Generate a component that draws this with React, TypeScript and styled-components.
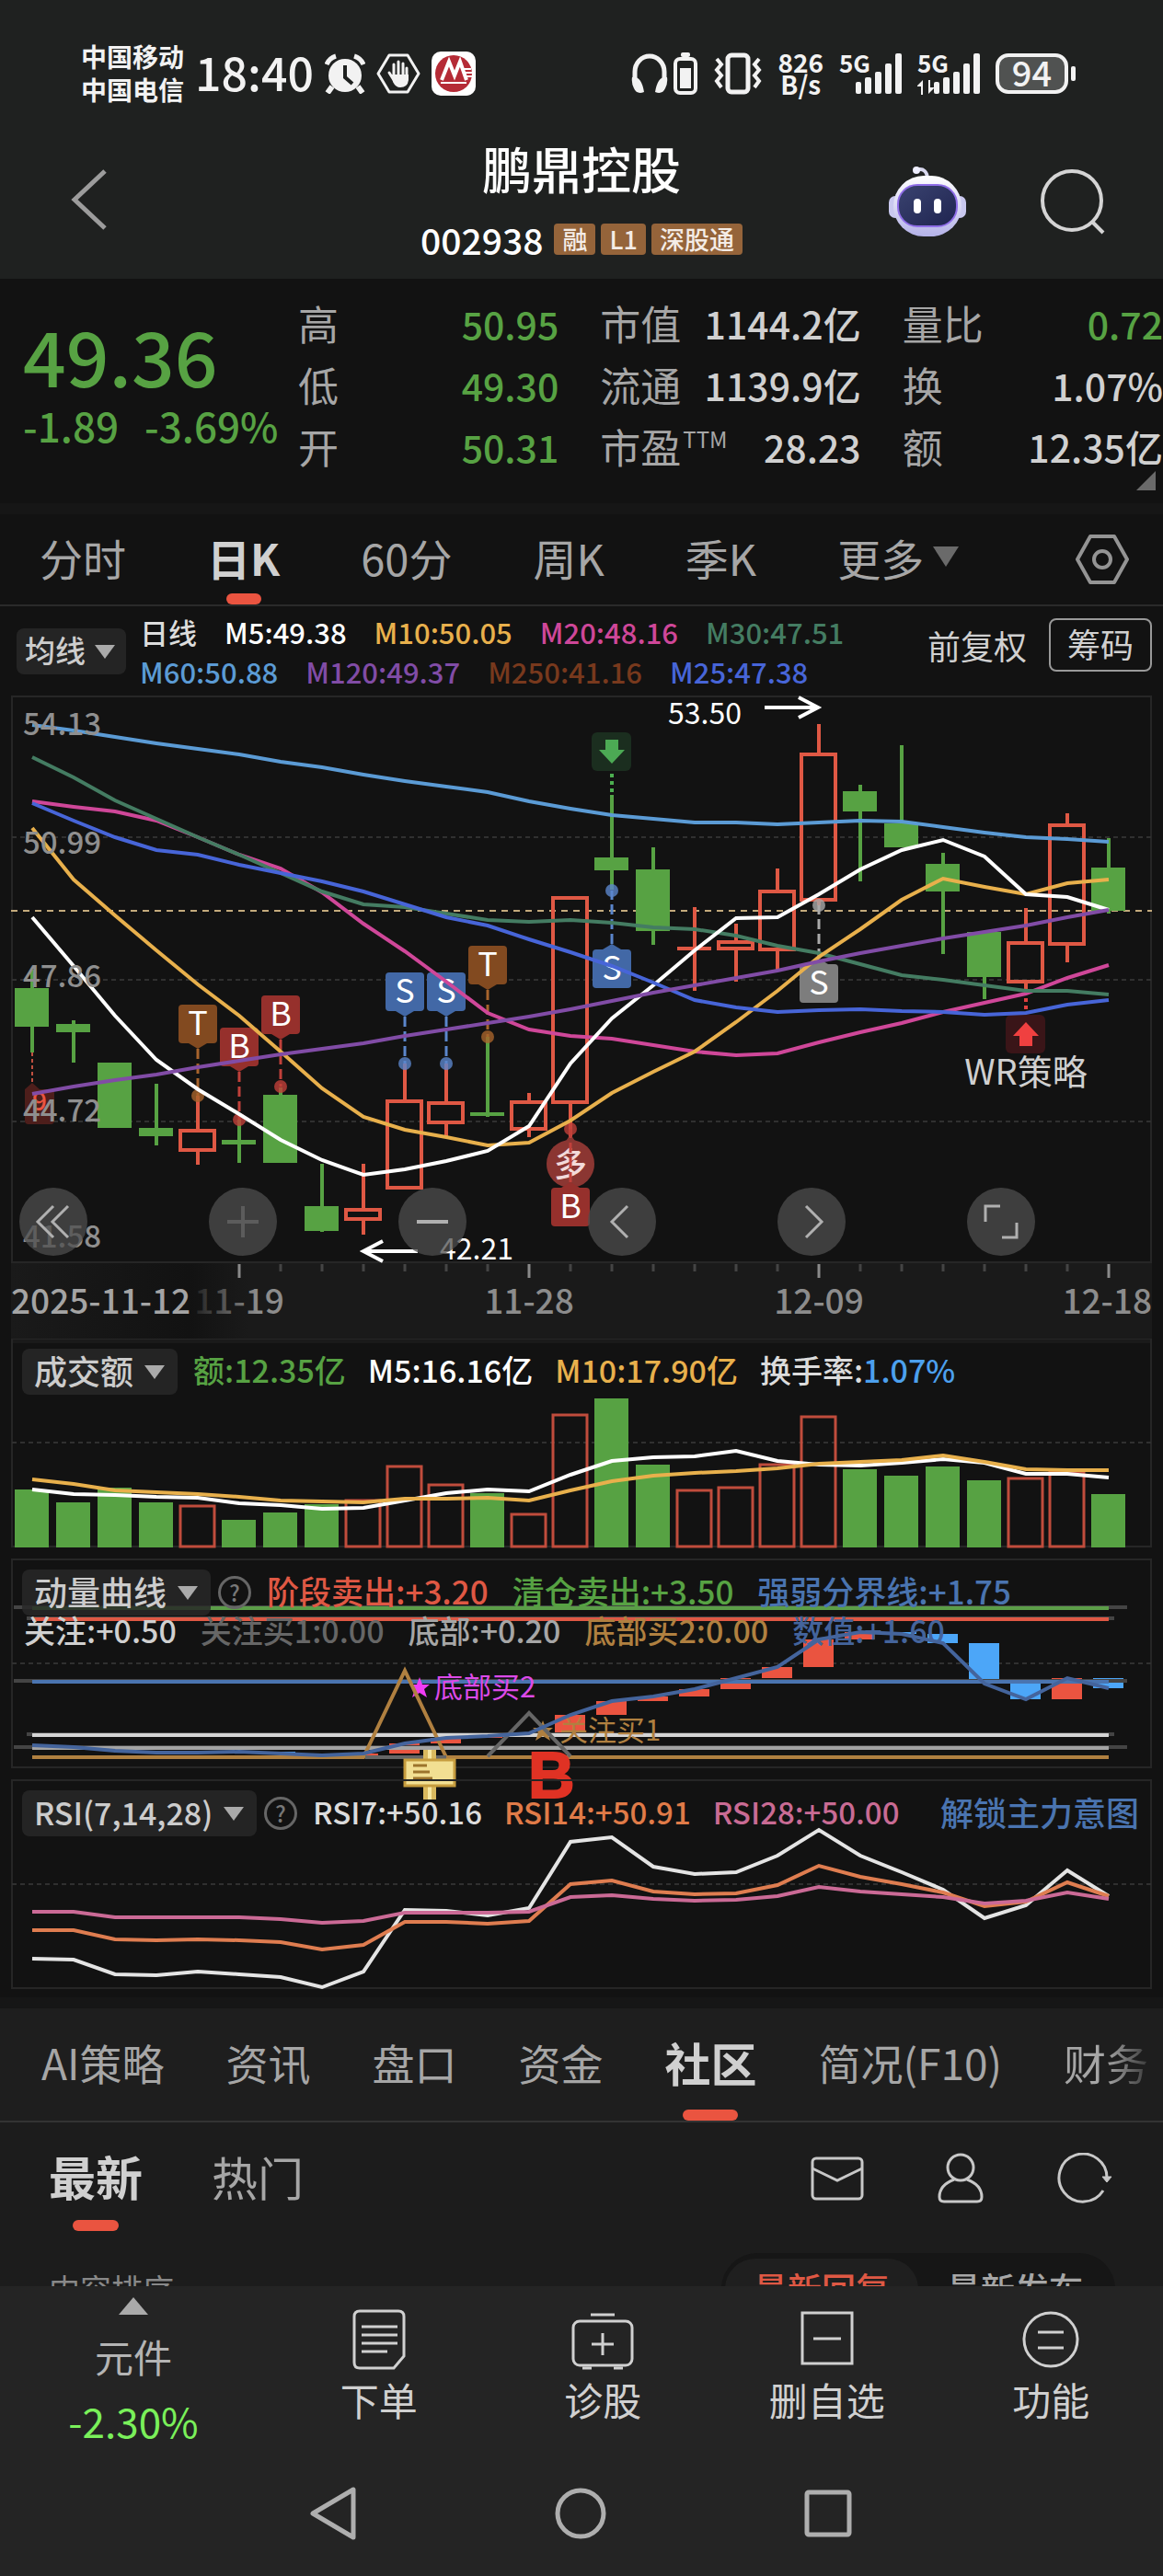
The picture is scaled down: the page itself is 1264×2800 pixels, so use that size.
import React from 'react';
import styled, { createGlobalStyle } from 'styled-components';

const GlobalStyle = createGlobalStyle`
  *, *::before, *::after { box-sizing: border-box; }
  body {
    margin: 0;
    background: #121212;
    color: #d0d0d0;
    font-family: "Noto Sans CJK SC", "Noto Sans", sans-serif;
    font-weight: 500;
  }
  button, select {
    font: inherit;
    color: inherit;
    background: none;
    border: 0;
    padding: 0;
    margin: 0;
  }
  svg { display: block; }
`;

const color = {
  up: '#df5844',
  down: '#57a243',
  text: '#d0d0d0',
  mute: '#a6a6a6',
  accent: '#ea5440',
  sky: '#5b9bd5',
  amber: '#e8b04c',
  pink: '#cf4799',
  pine: '#447c62',
  royal: '#4765d8',
  violet: '#814ca6',
  steel: '#4a74b0',
  ochre: '#b08040',
};

/* ---------- status bar and title ---------- */

const Header = styled.header`
  background: #1f2120;
`;

const StatusBar = styled.div`
  display: flex;
  align-items: center;
  justify-content: space-between;
  height: 116px;
  padding: 44px 95px 0 88px;
  color: #f2f2f2;
`;

const StatusGroup = styled.div<{ $gap: number }>`
  display: flex;
  align-items: center;
  gap: ${(p) => p.$gap}px;
`;

const TwoLines = styled.div<{ $size: number; $line: number }>`
  display: flex;
  flex-direction: column;
  padding-bottom: 2px;
  font-size: ${(p) => p.$size}px;
  line-height: ${(p) => p.$line}px;
  font-weight: 700;
  text-align: center;
`;

const Clock = styled.time`
  padding-bottom: 6px;
  font-size: 50px;
  line-height: 60px;
  font-weight: 500;
`;

const TitleBar = styled.div`
  display: grid;
  grid-template-columns: 1fr auto 1fr;
  align-items: center;
  height: 187px;
  padding: 19px 60px 0;
`;

const TitleStart = styled.div`
  padding-left: 16px;
`;

const TitleBlock = styled.div`
  display: flex;
  flex-direction: column;
  align-items: center;
  gap: 28px;
  padding-bottom: 11px;
`;

const StockName = styled.h1`
  margin: 0;
  font-size: 54px;
  line-height: 64px;
  font-weight: 500;
  color: #fff;
`;

const CodeRow = styled.div`
  display: flex;
  align-items: center;
  gap: 6px;
  height: 34px;
`;

const StockCode = styled.span`
  margin-right: 6px;
  font-size: 39px;
  line-height: 34px;
  color: #fff;
`;

const Tag = styled.span`
  padding: 0 9px;
  border-radius: 4px;
  background: #95643a;
  color: #f4ece6;
  font-size: 27px;
  line-height: 34px;
`;

const IconButton = styled.button`
  display: inline-flex;
  cursor: pointer;
`;

const TitleActions = styled.div`
  display: flex;
  justify-content: flex-end;
  align-items: center;
  gap: 78px;
`;

/* ---------- quote ---------- */

const Quote = styled.section`
  position: relative;
  display: flex;
  height: 244px;
  padding-top: 15px;
`;

const PriceBlock = styled.div`
  flex: 0 0 324px;
  padding: 23px 0 0 25px;
  color: ${color.down};
`;

const Price = styled.div`
  font-size: 82px;
  line-height: 90px;
`;

const Change = styled.div`
  display: flex;
  gap: 28px;
  font-size: 44px;
  line-height: 62px;
`;

const Figures = styled.dl`
  flex: 1;
  display: grid;
  grid-template-columns: repeat(3, 1fr);
  grid-auto-rows: 67px;
  column-gap: 45px;
  margin: 0;
`;

const Figure = styled.div`
  display: flex;
  justify-content: space-between;
  line-height: 67px;
  white-space: nowrap;
`;

const FigureName = styled.dt`
  display: flex;
  font-size: 44px;
  font-weight: 400;
  color: ${color.mute};
`;

const Superscript = styled.span`
  margin-left: 2px;
  font-size: 24px;
  line-height: 50px;
`;

const FigureValue = styled.dd<{ $down?: boolean }>`
  margin: 0;
  font-size: 41px;
  color: ${(p) => (p.$down ? color.down : color.text)};
`;

const Corner = styled.svg`
  position: absolute;
  right: 8px;
  bottom: 14px;
`;

const Divider = styled.div`
  height: 12px;
  background: #161616;
`;

/* ---------- tabs ---------- */

const PeriodTabs = styled.nav`
  display: flex;
  align-items: center;
  gap: 88px;
  height: 100px;
  padding: 0 37px 0 43px;
  border-bottom: 2px solid #2a2a2a;
`;

const Tab = styled.button<{ $active?: boolean; $size: number; $mark: number }>`
  display: flex;
  align-items: center;
  gap: 10px;
  align-self: stretch;
  position: relative;
  padding-bottom: 6px;
  white-space: nowrap;
  font-size: ${(p) => p.$size}px;
  font-weight: ${(p) => (p.$active ? 700 : 400)};
  color: ${(p) => (p.$active ? color.text : color.mute)};
  cursor: pointer;
  &::after {
    content: '';
    display: ${(p) => (p.$active ? 'block' : 'none')};
    position: absolute;
    left: 50%;
    bottom: 0;
    width: ${(p) => p.$mark}px;
    height: 12px;
    margin-left: ${(p) => -p.$mark / 2}px;
    border-radius: 6px;
    background: ${color.accent};
  }
`;

const PushRight = styled.div`
  margin-left: auto;
  display: flex;
  align-items: center;
  gap: 80px;
`;

const SectionTabs = styled.nav`
  display: flex;
  gap: 67px;
  height: 124px;
  padding: 0 24px 0 45px;
  overflow: hidden;
  background: #1e1e1e;
  border-bottom: 2px solid #333;
  & > button:last-child {
    background: linear-gradient(90deg, ${color.mute} 50%, #3a3a3a);
    -webkit-background-clip: text;
    background-clip: text;
    color: transparent;
  }
`;

/* ---------- chart headers ---------- */

const AverageBar = styled.div`
  display: flex;
  align-items: center;
  height: 97px;
  padding: 0 12px 0 18px;
`;

const Picker = styled.label<{ $size: number }>`
  display: inline-flex;
  align-items: center;
  gap: 11px;
  flex: none;
  height: 50px;
  padding: 0 14px 0 13px;
  border-radius: 8px;
  background: rgba(40, 40, 40, 0.85);
  color: #ccc;
  font-size: ${(p) => p.$size}px;
  & > select {
    appearance: none;
    height: 50px;
    padding-bottom: 3px;
    line-height: 47px;
    cursor: pointer;
  }
`;

const SmallPicker = styled(Picker)`
  gap: 10px;
  padding: 0 12px 0 9px;
`;

const AverageLegend = styled.div`
  margin-left: 15px;
`;

const LegendRow = styled.div<{ $gap: number; $line: number; $size: number }>`
  display: flex;
  gap: ${(p) => p.$gap}px;
  font-size: ${(p) => p.$size}px;
  line-height: ${(p) => p.$line}px;
  white-space: nowrap;
`;

const Tint = styled.span<{ $c: string }>`
  color: ${(p) => p.$c};
`;

const AverageActions = styled.div`
  display: flex;
  align-items: center;
  gap: 24px;
  margin-left: auto;
  padding-bottom: 13px;
  font-size: 36px;
  font-weight: 400;
`;

const AdjustButton = styled.button`
  cursor: pointer;
`;

const ChipButton = styled.button`
  height: 58px;
  padding: 0 18px 4px;
  border: 2px solid #999;
  border-radius: 8px;
  line-height: 50px;
  cursor: pointer;
`;

const Panel = styled.section`
  display: grid;
  & > * { grid-area: 1 / 1; }
`;

const PanelHead = styled.div`
  align-self: start;
  padding: 12px 24px 0;
`;

const PanelLine = styled.div`
  display: flex;
  align-items: center;
  height: 49px;
  & > ${LegendRow} {
    margin-left: 17px;
    padding-bottom: 3px;
  }
`;

const SecondLine = styled.div`
  margin-left: 2px;
`;

const HelpButton = styled.button`
  flex: none;
  width: 36px;
  height: 36px;
  margin-left: 8px;
  border: 3px solid #666;
  border-radius: 50%;
  color: #777;
  font-size: 24px;
  line-height: 28px;
  text-align: center;
  cursor: pointer;
`;

const UnlockLink = styled.a`
  margin-left: auto;
  padding: 0 2px 3px 0;
  font-size: 36px;
  color: ${color.steel};
  text-decoration: none;
  white-space: nowrap;
`;

const Plot = styled.svg`
  width: 100%;
  height: auto;
  overflow: visible;
  font-family: "Noto Sans CJK SC", sans-serif;
`;

const ChartArea = styled.section`
  position: relative;
`;

const ChartControls = styled.div`
  position: absolute;
  left: 21px;
  bottom: 89px;
  display: flex;
  gap: 132px;
`;

const RoundButton = styled.button`
  width: 74px;
  height: 74px;
  display: flex;
  align-items: center;
  justify-content: center;
  border-radius: 50%;
  background: rgba(77, 77, 77, 0.75);
  cursor: pointer;
`;

/* ---------- community ---------- */

const Community = styled.section`
  background: #1c1c1c;
`;

const FeedTabs = styled.div`
  display: flex;
  align-items: center;
  height: 118px;
  padding: 4px 55px 0 53px;
`;

const FeedTab = styled(Tab)`
  margin-right: 75px;
`;

const FeedIcons = styled(PushRight)`
  gap: 80px;
`;

const SortRow = styled.div`
  display: flex;
  align-items: flex-start;
  justify-content: space-between;
  height: 60px;
  padding: 24px 52px 0 53px;
  overflow: hidden;
`;

const SortLabel = styled.span`
  font-size: 34px;
  line-height: 78px;
  font-weight: 400;
  color: #888;
`;

const Segment = styled.div`
  display: flex;
  padding: 6px 4px;
  border-radius: 40px;
  background: #161616;
`;

const SegmentItem = styled.button<{ $on?: boolean }>`
  height: 66px;
  padding: 0 31px 3px;
  border-radius: 33px;
  background: ${(p) => (p.$on ? '#1f1f1f' : 'transparent')};
  color: ${(p) => (p.$on ? color.up : color.mute)};
  font-size: 37px;
  line-height: 62px;
  cursor: pointer;
`;

/* ---------- bottom bars ---------- */

const Dock = styled.nav`
  display: flex;
  height: 182px;
  background: #242424;
`;

const SectorLink = styled.a`
  flex: 0 0 290px;
  display: flex;
  flex-direction: column;
  align-items: center;
  padding-top: 12px;
  color: #b4b4b4;
  font-size: 42px;
  line-height: 70px;
  font-weight: 400;
  text-decoration: none;
  & > svg { margin-bottom: 10px; }
`;

const SectorMove = styled.span`
  font-size: 44px;
  color: #7af05a;
`;

const DockItem = styled.button`
  flex: 1;
  display: flex;
  flex-direction: column;
  align-items: center;
  justify-content: flex-start;
  padding-top: 24px;
  color: #d0d0d0;
  font-size: 42px;
  line-height: 62px;
  font-weight: 400;
  cursor: pointer;
`;

const SystemNav = styled.nav`
  display: flex;
  justify-content: center;
  gap: 213px;
  height: 133px;
  padding: 35px 2px 0 0;
  background: #242424;
`;

/* ---------- data ---------- */

const X = (i: number) => Math.round(35 + 45 * i);
const path = (ys: number[]) => ys.map((y, i) => `${X(i)},${y}`).join(' ');

type Candle = [kind: 'g' | 'r', top: number, bottom: number, high: number, low: number];

const candles: Candle[] = [
  ['g', 1074, 1116, 1054, 1144], ['g', 1113, 1122, 1109, 1155], ['g', 1155, 1226, 1155, 1226],
  ['g', 1226, 1235, 1178, 1245], ['r', 1227, 1252, 1191, 1266], ['g', 1239, 1244, 1217, 1264],
  ['g', 1190, 1264, 1182, 1264], ['g', 1311, 1338, 1265, 1339], ['r', 1313, 1327, 1265, 1342],
  ['r', 1195, 1293, 1156, 1293], ['r', 1197, 1222, 1156, 1236], ['g', 1209, 1213, 1127, 1214],
  ['r', 1196, 1229, 1188, 1236], ['r', 974, 1200, 974, 1240], ['g', 932, 946, 864, 967],
  ['g', 945, 1012, 921, 1027], ['r', 1029, 1033, 986, 1077], ['r', 1022, 1033, 1004, 1067],
  ['r', 967, 1034, 944, 1054], ['r', 818, 980, 787, 984], ['g', 860, 882, 853, 958],
  ['g', 895, 921, 810, 921], ['g', 939, 969, 927, 1037], ['g', 1013, 1062, 1013, 1086],
  ['r', 1023, 1069, 987, 1077], ['r', 895, 1028, 884, 1046], ['g', 943, 990, 911, 993],
];

const averages: [string, number[]][] = [
  [color.sky, [788, 794, 801, 808, 814, 820, 828, 834, 842, 849, 855, 861, 871, 879, 886, 890, 894, 894, 896, 894, 892, 893, 899, 905, 910, 912, 915]],
  [color.pink, [871, 877, 882, 892, 910, 929, 944, 970, 1004, 1034, 1067, 1101, 1119, 1126, 1129, 1136, 1143, 1147, 1145, 1133, 1122, 1112, 1100, 1090, 1080, 1063, 1049]],
  [color.pine, [823, 845, 870, 890, 910, 929, 949, 969, 983, 986, 993, 1000, 1002, 1000, 1003, 1008, 1010, 1017, 1028, 1036, 1048, 1060, 1065, 1071, 1077, 1077, 1081]],
  [color.amber, [900, 956, 995, 1033, 1070, 1104, 1143, 1183, 1214, 1228, 1236, 1245, 1242, 1218, 1188, 1165, 1143, 1111, 1077, 1040, 1010, 978, 955, 964, 972, 960, 956]],
  ['#ffffff', [997, 1050, 1104, 1152, 1184, 1211, 1239, 1261, 1277, 1271, 1262, 1251, 1224, 1156, 1107, 1071, 1033, 998, 997, 972, 945, 924, 913, 931, 972, 975, 989]],
  [color.royal, [873, 892, 910, 924, 929, 940, 949, 958, 969, 983, 997, 1006, 1021, 1035, 1050, 1068, 1087, 1095, 1100, 1098, 1097, 1099, 1100, 1103, 1101, 1092, 1087]],
  [color.violet, [1189, 1181, 1174, 1168, 1160, 1153, 1146, 1140, 1134, 1126, 1119, 1112, 1105, 1097, 1088, 1079, 1071, 1063, 1055, 1045, 1036, 1028, 1020, 1013, 1006, 997, 989]],
];

const volumeTops = [1619, 1633, 1617, 1633, 1636, 1652, 1644, 1635, 1630, 1593, 1613, 1623, 1645, 1537, 1520, 1592, 1619, 1616, 1591, 1539, 1597, 1604, 1594, 1609, 1606, 1599, 1624];
const volumeM5 = [1619, 1624, 1625, 1627, 1628, 1634, 1636, 1640, 1639, 1631, 1623, 1619, 1621, 1603, 1588, 1584, 1583, 1577, 1588, 1592, 1593, 1590, 1586, 1590, 1602, 1602, 1606];
const volumeM10 = [1608, 1613, 1620, 1622, 1624, 1627, 1631, 1632, 1633, 1629, 1629, 1628, 1631, 1620, 1610, 1604, 1601, 1599, 1596, 1591, 1589, 1587, 1582, 1589, 1597, 1598, 1598];
const momentum = [1897, 1899, 1903, 1905, 1905, 1904, 1906, 1908, 1906, 1895, 1889, 1887, 1884, 1864, 1849, 1844, 1836, 1824, 1812, 1782, 1774, 1776, 1786, 1830, 1847, 1824, 1835];
const rsi: [string, number[]][] = [
  ['#e4e4e4', [2129, 2130, 2146, 2147, 2143, 2146, 2149, 2160, 2143, 2076, 2077, 2082, 2074, 2002, 1997, 2029, 2037, 2035, 2017, 1989, 2017, 2035, 2054, 2085, 2071, 2033, 2061]],
  ['#df7d50', [2098, 2098, 2108, 2109, 2108, 2109, 2111, 2119, 2114, 2089, 2089, 2091, 2088, 2048, 2044, 2056, 2059, 2058, 2049, 2028, 2040, 2048, 2057, 2072, 2067, 2046, 2061]],
  ['#cb6a96', [2078, 2078, 2084, 2084, 2084, 2084, 2086, 2090, 2088, 2079, 2079, 2079, 2078, 2062, 2060, 2064, 2066, 2065, 2061, 2051, 2056, 2059, 2062, 2069, 2066, 2057, 2064]],
];

type Mark = { i: number; text: string; top: number; dot: number; fill: string; dash: string };
const brown = { fill: '#824a20', dash: '#a8642c' };
const red = { fill: '#96302c', dash: '#c0403a' };
const blue = { fill: '#4268a6', dash: '#5b86cc' };
const marks: Mark[] = [
  { i: 4, text: 'T', top: 1092, dot: 1191, ...brown },
  { i: 5, text: 'B', top: 1117, dot: 1217, ...red },
  { i: 6, text: 'B', top: 1082, dot: 1181, ...red },
  { i: 9, text: 'S', top: 1057, dot: 1156, ...blue },
  { i: 10, text: 'S', top: 1057, dot: 1156, ...blue },
  { i: 11, text: 'T', top: 1028, dot: 1127, ...brown },
  { i: 14, text: 'S', top: 1032, dot: 968, ...blue },
  { i: 19, text: 'S', top: 1048, dot: 984, fill: '#7d7d7d', dash: '#aaaaaa' },
  { i: 13, text: 'B', top: 1291, dot: 1227, ...red },
];

/* ---------- chart parts ---------- */

function CandleShape({ c, i }: { c: Candle; i: number }) {
  const [kind, top, bottom, high, low] = c;
  const x = X(i);
  if (kind === 'g') {
    return (
      <g fill={color.down}>
        <rect x={x - 2} y={high} width={4} height={low - high} />
        <rect x={x - 19} y={top} width={37} height={bottom - top} />
      </g>
    );
  }
  return (
    <g fill={color.up}>
      <rect x={x - 2} y={high} width={4} height={top - high} />
      <rect x={x - 2} y={bottom} width={4} height={low - bottom} />
      {bottom - top > 6 ? (
        <rect x={x - 19} y={top + 2} width={37} height={bottom - top - 4} fill="none" stroke={color.up} strokeWidth={4} />
      ) : (
        <rect x={x - 19} y={top} width={37} height={bottom - top} />
      )}
    </g>
  );
}

function MarkShape({ m }: { m: Mark }) {
  const x = X(m.i);
  const above = m.dot > m.top;
  const edge = above ? m.top + 42 : m.top;
  const tip = above ? edge + 6 : edge - 6;
  return (
    <g>
      <line x1={x} y1={tip} x2={x} y2={m.dot} stroke={m.dash} strokeWidth={3} strokeDasharray="11 5" />
      <circle cx={x} cy={m.dot} r={7} fill={m.dash} fillOpacity={0.8} />
      <path d={`M${x - 10} ${edge}L${x} ${tip}L${x + 10} ${edge}z`} fill={m.fill} />
      <rect x={x - 21} y={m.top} width={42} height={42} rx={4} fill={m.fill} />
      <text x={x} y={m.top + 33} fill="#fff" fontSize={36} fontWeight={400} textAnchor="middle">{m.text}</text>
    </g>
  );
}

function Frame({ top, bottom, grid }: { top: number; bottom: number; grid: number[] }) {
  return (
    <g stroke="#262626" strokeWidth={2} fill="none">
      <rect x={13} y={top} width={1238} height={bottom - top} />
      {grid.map((y) => (
        <line key={y} x1={13} x2={1251} y1={y} y2={y} stroke="#303030" strokeDasharray="5 4" />
      ))}
    </g>
  );
}

function MainChart() {
  return (
    <Plot viewBox="0 756 1264 698" role="img" aria-label="日K线图">
      <defs>
        <linearGradient id="axisFade" x1="0" x2="1" y1="0" y2="0">
          <stop offset="0" stopColor="#1a1a1a" />
          <stop offset="0.75" stopColor="#121212" />
          <stop offset="1" stopColor="#1a1a1a" />
        </linearGradient>
        <linearGradient id="labelFade" x1="0" x2="1" y1="0" y2="0">
          <stop offset="0" stopColor="#222" />
          <stop offset="0.7" stopColor="#8c8c8c" />
        </linearGradient>
      </defs>
      <rect x={12} y={1373} width={1240} height={82} fill="#1a1a1a" />
      <rect x={12} y={1373} width={258} height={82} fill="url(#axisFade)" />
      <Frame top={757} bottom={1372} grid={[910, 1065, 1219]} />
      <line x1={12} x2={1252} y1={990} y2={990} stroke="#c4aa7c" strokeWidth={2} strokeDasharray="7 6" />

      {candles.map((c, i) => <CandleShape key={i} c={c} i={i} />)}

      <line x1={35} x2={35} y1={1144} y2={1178} stroke="#c05040" strokeWidth={2} strokeDasharray="4 3" />
      <path d="M27 1184 35 1177 43 1184h12a4 4 0 0 1 4 4v30a4 4 0 0 1-4 4H31a4 4 0 0 1-4-4z" fill="#4d1e1b" />
      <text x={35} y={1207} fill={color.accent} fontSize={28} fontWeight={500}>9</text>

      <line x1={665} x2={665} y1={841} y2={866} stroke="#4caf50" strokeWidth={4} strokeDasharray="4 4" />
      <rect x={643} y={796} width={43} height={42} rx={6} fill="#1b2e1f" />
      <path d="M658 804h14v11h7l-14 15-14-15h7z" fill="#4caa54" />

      <line x1={1115} x2={1115} y1={1077} y2={1102} stroke="#e04040" strokeWidth={4} strokeDasharray="4 4" />
      <rect x={1093} y={1103} width={43} height={42} rx={6} fill="#3a1518" />
      <path d="M1108 1137h14v-11h7l-14-15-14 15h7z" fill="#f04040" />
      <text x={1115} y={1179} fill={color.text} fontSize={38} fontWeight={400} textAnchor="middle">WR策略</text>

      <path d="M613 1243 620 1233 627 1243z" fill="#8b3632" />
      <circle cx={620} cy={1265} r={26} fill="#8b3632" />
      <text x={620} y={1279} fill="#f2dada" fontSize={36} fontWeight={500} textAnchor="middle">多</text>

      {marks.map((m) => <MarkShape key={`${m.i}${m.top}`} m={m} />)}

      {averages.map(([stroke, ys]) => (
        <polyline key={stroke} points={path(ys)} fill="none" stroke={stroke} strokeWidth={4} />
      ))}

      <g fill="#8f8f8f" fontSize={33} fontWeight={500}>
        <text x={25} y={799}>54.13</text>
        <text x={25} y={928}>50.99</text>
        <text x={25} y={1073}>47.86</text>
        <text x={25} y={1219}>44.72</text>
        <text x={25} y={1356}>41.58</text>
      </g>
      <g fill="#fff" fontSize={32} fontWeight={400}>
        <text x={726} y={787}>53.50</text>
        <text x={478} y={1369}>42.21</text>
      </g>
      <g stroke="#fff" strokeWidth={4} fill="none">
        <path d="M831 769H888M868 758 889 769 868 780" />
        <path d="M454 1360H397M416 1349 395 1360 416 1371" />
      </g>

      {candles.map((_, i) => {
        const major = i % 7 === 5;
        return i < 5 ? null : (
          <line key={i} x1={X(i)} x2={X(i)} y1={1374} y2={major ? 1389 : 1382}
            stroke={major ? '#8a8a8a' : '#444'} strokeWidth={3} />
        );
      })}
      <g fill="#8c8c8c" fontSize={37} fontWeight={500}>
        <text x={12} y={1428} fill="#a4a4a4">2025-11-12</text>
        <text x={260} y={1428} textAnchor="middle" fill="url(#labelFade)">11-19</text>
        <text x={575} y={1428} textAnchor="middle">11-28</text>
        <text x={890} y={1428} textAnchor="middle">12-09</text>
        <text x={1252} y={1428} textAnchor="end">12-18</text>
      </g>
    </Plot>
  );
}

function VolumeChart() {
  return (
    <Plot viewBox="0 1454 1264 240" role="img" aria-label="成交额">
      <rect x={12} y={1454} width={1240} height={6} fill="#1a1a1a" />
      <Frame top={1455} bottom={1681} grid={[1568]} />
      {volumeTops.map((top, i) =>
        candles[i][0] === 'g' ? (
          <rect key={i} x={X(i) - 19} y={top} width={37} height={1682 - top} fill={color.down} />
        ) : (
          <rect key={i} x={X(i) - 19} y={top + 1} width={37} height={1680 - top} fill="none" stroke="#c04c3c" strokeWidth={3} />
        ),
      )}
      <polyline points={path(volumeM5)} fill="none" stroke="#fff" strokeWidth={4} />
      <polyline points={path(volumeM10)} fill="none" stroke={color.amber} strokeWidth={4} />
    </Plot>
  );
}

const levels: [number, string, number][] = [
  [1748, '#5b9e48', 15], [1760, color.up, 29], [1828, color.steel, 15], [1886, '#d4d4d4', 29], [1900, '#a4a4a4', 15],
];

function MomentumChart() {
  return (
    <Plot viewBox="0 1694 1264 240" role="img" aria-label="动量曲线">
      <Frame top={1695} bottom={1921} grid={[1808]} />
      {momentum.map((v, i) => {
        if (i === 0) return null;
        const prev = momentum[i - 1];
        return (
          <rect key={i} x={X(i) - 17} y={Math.min(prev, v)} width={33} height={Math.abs(prev - v)}
            fill={v < prev ? color.accent : '#4ca6f8'} />
        );
      })}
      {levels.map(([y, stroke, inset]) => (
        <g key={y} strokeWidth={4}>
          <line x1={inset} x2={1240 - inset} y1={y - 1} y2={y - 1} stroke="#444" />
          <line x1={35} x2={1205} y1={y} y2={y} stroke={stroke} />
        </g>
      ))}
      <g fontSize={31} fontWeight={400}>
        <text x={472} y={1845} fill="#dc4ae8">底部买2</text>
        <text x={608} y={1892} fill={color.ochre}>关注买1</text>
      </g>
      <path d="M456 1823l3 8h8l-6 5 3 9-8-5-8 5 3-9-6-5h8z" fill="#f03cf4" />
      <path d="M590 1870l3 8h8l-6 5 3 9-8-5-8 5 3-9-6-5h8z" fill={color.ochre} />
      <g fill="none" strokeWidth={4}>
        <polyline points="35,1910 395,1910 440,1816 485,1910 1205,1910" stroke={color.ochre} />
        <polyline points="397,1910 485,1910" stroke="#666" />
        <polyline points="530,1909 575,1862 620,1909" stroke="#666" />
        <polyline points={path(momentum)} stroke="#44649c" />
      </g>
      <rect x={460} y={1902} width={14} height={54} fill="#d9b95e" />
      <rect x={465} y={1902} width={4} height={54} fill="#f6e7a2" />
      <rect x={440} y={1913} width={54} height={28} fill="#f2df92" stroke="#c69c3e" strokeWidth={3} />
      <path d="M449 1919h15M449 1926h18M449 1933h21" stroke="#9c742c" strokeWidth={3} />
      <text x={574} y={1954} fill="#e03224" stroke="#e03224" strokeWidth={2} fontSize={70} fontWeight={700} fontFamily="'Liberation Sans'">B</text>
    </Plot>
  );
}

function RsiChart() {
  return (
    <Plot viewBox="0 1934 1264 237" role="img" aria-label="RSI">
      <Frame top={1935} bottom={2161} grid={[2048]} />
      {rsi.map(([stroke, ys]) => (
        <polyline key={stroke} points={path(ys)} fill="none" stroke={stroke} strokeWidth={4} />
      ))}
    </Plot>
  );
}

function Caret() {
  return (
    <svg width="22" height="16" viewBox="0 0 22 16" aria-hidden="true"><path d="M0 1h22L11 16z" fill="#aaa" /></svg>
  );
}

function IndicatorPicker({ name, size = 36 }: { name: string; size?: number }) {
  return (
    <Picker $size={size}>
      <select aria-label={`指标 ${name}`} defaultValue={name}><option>{name}</option></select>
      <Caret />
    </Picker>
  );
}

/* ---------- icons ---------- */

const Signal = () => (
  <svg width="50" height="46" viewBox="0 0 50 46" fill="#f2f2f2">
    <rect x="0" y="32" width="6" height="13" rx="2" /><rect x="10" y="27" width="7" height="18" rx="2" />
    <rect x="21" y="21" width="7" height="24" rx="2" /><rect x="32" y="12" width="7" height="33" rx="2" />
    <rect x="43" y="1" width="7" height="44" rx="2" />
  </svg>
);

const SignalGroup = styled.div`
  display: grid;
  & > * { grid-area: 1 / 1; }
  & > svg { margin-left: 18px; }
  & > span {
    font-size: 26px;
    line-height: 22px;
    font-weight: 700;
    align-self: start;
  }
  & > svg:nth-child(3) { margin-left: 0; align-self: end; }
`;

const BatteryLevel = styled.div`
  display: flex;
  align-items: center;
  gap: 3px;
  & > span {
    width: 79px;
    height: 44px;
    border: 4px solid #f2f2f2;
    border-radius: 14px;
    background: #505251;
    font-size: 38px;
    line-height: 31px;
    text-align: center;
  }
  &::after {
    content: '';
    width: 5px;
    height: 16px;
    border-radius: 2px;
    background: #f2f2f2;
  }
`;

const StatusLeftIcons = () => (
  <>
    <svg width="44" height="44" viewBox="0 0 44 44">
      <circle cx="22" cy="24" r="18" fill="#f2f2f2" />
      <path d="M2 12A16 16 0 0 1 12 3M42 12A16 16 0 0 0 32 3" stroke="#f2f2f2" strokeWidth="5" fill="none" />
      <path d="M8 36 3 43M36 36l5 7" stroke="#f2f2f2" strokeWidth="6" />
      <path d="M22 13v13l8 7" stroke="#1f2120" strokeWidth="4" fill="none" />
    </svg>
    <svg width="48" height="46" viewBox="0 0 48 46">
      <path d="M14 3h20l12 20-12 20H14L2 23z" fill="none" stroke="#f2f2f2" strokeWidth="3" strokeLinejoin="round" />
      <g stroke="#f2f2f2" strokeWidth="3" strokeLinecap="round">
        <path d="M19 13v14M24 10v16M29 12v14M33 17v10M14 22l5 8" />
      </g>
      <path d="M17 24h18v6q-1 8-9 8-5 0-8-6z" fill="#f2f2f2" />
    </svg>
    <svg width="48" height="48" viewBox="0 0 48 48">
      <rect width="48" height="48" rx="10" fill="#fff" />
      <circle cx="24" cy="24" r="20" fill="#b52b36" />
      <path d="M11 31 19 11l6 15 6-15 7 20" fill="none" stroke="#fff" strokeWidth="4" />
      <path d="M10 34h28M34 19h9M36 23h8M38 27h6" stroke="#fff" strokeWidth="2" />
    </svg>
  </>
);

const Robot = () => (
  <svg width="84" height="80" viewBox="0 0 84 80">
    <defs>
      <linearGradient id="shell" x1="0" y1="0" x2="0" y2="1">
        <stop offset="0" stopColor="#ffffff" /><stop offset="1" stopColor="#b4b2e8" />
      </linearGradient>
      <linearGradient id="face" x1="0" y1="0" x2="1" y2="1">
        <stop offset="0" stopColor="#3a4370" /><stop offset="1" stopColor="#1f2450" />
      </linearGradient>
    </defs>
    <path d="M42 16C42 8 38 3 29 6" stroke="#d8d8ee" strokeWidth="4" fill="none" strokeLinecap="round" />
    <circle cx="30" cy="6" r="4" fill="#eef" />
    <rect x="0" y="34" width="14" height="24" rx="7" fill="#c9c8ef" />
    <rect x="70" y="34" width="14" height="24" rx="7" fill="#c9c8ef" />
    <rect x="5" y="12" width="74" height="66" rx="33" fill="url(#shell)" />
    <rect x="10" y="22" width="64" height="45" rx="21" fill="url(#face)" stroke="#8f6ee8" strokeWidth="2" />
    <rect x="27" y="37" width="8" height="16" rx="4" fill="#fff" />
    <rect x="49" y="37" width="8" height="16" rx="4" fill="#fff" />
  </svg>
);

const stroke = { fill: 'none', stroke: '#d0d0d0', strokeWidth: 3 } as const;

const dock = [
  { label: '下单', icon: <svg width="60" height="68" viewBox="0 0 60 68" {...stroke}><path d="M9 3h42q6 0 6 6v43L46 65H9q-6 0-6-6V9q0-6 6-6z" /><path d="M11 20h39M11 29h39M11 38h39M11 47h28" /></svg> },
  { label: '诊股', icon: <svg width="68" height="68" viewBox="0 0 68 68" {...stroke}><rect x="2" y="14" width="64" height="48" rx="7" /><path d="M21 7h26M34 27v24M22 39h24M12 65h10M46 65h10" /></svg> },
  { label: '删自选', icon: <svg width="60" height="68" viewBox="0 0 60 68" {...stroke}><rect x="3" y="5" width="54" height="55" /><path d="M15 33h30" /></svg> },
  { label: '功能', icon: <svg width="64" height="68" viewBox="0 0 64 68" {...stroke}><circle cx="32" cy="34" r="29" /><path d="M18 26h28M18 43h28" /></svg> },
];

export default function App() {
  return (
    <>
      <GlobalStyle />
      <Header>
        <StatusBar>
          <StatusGroup $gap={12}>
            <TwoLines $size={28} $line={36}><span>中国移动</span><span>中国电信</span></TwoLines>
            <Clock>18:40</Clock>
            <StatusLeftIcons />
          </StatusGroup>
          <StatusGroup $gap={17}>
            <StatusGroup $gap={4}>
              <svg width="42" height="44" viewBox="0 0 42 44">
                <path d="M5 30V20a16 17 0 0 1 32 0v10" fill="none" stroke="#f2f2f2" strokeWidth="5" />
                <path d="M2 26q10-2 13 16-8 3-11-4-3-6-2-12zM40 26q-10-2-13 16 8 3 11-4 3-6 2-12z" fill="#f2f2f2" />
              </svg>
              <svg width="28" height="48" viewBox="0 0 28 48">
                <rect x="9" y="1" width="10" height="5" rx="2" fill="#f2f2f2" />
                <rect x="3" y="8" width="22" height="37" rx="5" fill="none" stroke="#f2f2f2" strokeWidth="4" />
                <rect x="8" y="18" width="12" height="22" fill="#f2f2f2" />
              </svg>
            </StatusGroup>
            <svg width="52" height="46" viewBox="0 0 52 46" fill="none" stroke="#f2f2f2" strokeWidth="5">
              <rect x="15" y="3" width="22" height="40" rx="4" />
              <path d="M3 7l5 6-5 6 5 6-5 6 5 7M49 7l-5 6 5 6-5 6 5 6-5 7" strokeWidth="4" />
            </svg>
            <TwoLines $size={28} $line={24}><span>826</span><span>B/s</span></TwoLines>
            <SignalGroup><span>5G</span><Signal /></SignalGroup>
            <SignalGroup>
              <span>5G</span><Signal />
              <svg width="18" height="16" viewBox="0 0 18 16" fill="#f2f2f2"><path d="M0 6l6-6v16H4V7H0zM18 9l-6 6V0h2v8h4z" /></svg>
            </SignalGroup>
            <BatteryLevel><span>94</span></BatteryLevel>
          </StatusGroup>
        </StatusBar>
        <TitleBar>
          <TitleStart>
            <IconButton aria-label="返回">
              <svg width="42" height="68" viewBox="0 0 42 68"><path d="M38 3 5 34l33 31" fill="none" stroke="#9c9c9c" strokeWidth="5" /></svg>
            </IconButton>
          </TitleStart>
          <TitleBlock>
            <StockName>鹏鼎控股</StockName>
            <CodeRow>
              <StockCode>002938</StockCode>
              <Tag>融</Tag><Tag>L1</Tag><Tag>深股通</Tag>
            </CodeRow>
          </TitleBlock>
          <TitleActions>
            <IconButton aria-label="智能助手"><Robot /></IconButton>
            <IconButton aria-label="搜索">
              <svg width="76" height="76" viewBox="0 0 76 76" fill="none" stroke="#d4d4d4" strokeWidth="4"><circle cx="37" cy="37" r="32" /><path d="M59 60l12 12" /></svg>
            </IconButton>
          </TitleActions>
        </TitleBar>
      </Header>

      <main>
        <Quote>
          <PriceBlock>
            <Price>49.36</Price>
            <Change><span>-1.89</span><span>-3.69%</span></Change>
          </PriceBlock>
          <Figures>
            <Figure><FigureName>高</FigureName><FigureValue $down>50.95</FigureValue></Figure>
            <Figure><FigureName>市值</FigureName><FigureValue>1144.2亿</FigureValue></Figure>
            <Figure><FigureName>量比</FigureName><FigureValue $down>0.72</FigureValue></Figure>
            <Figure><FigureName>低</FigureName><FigureValue $down>49.30</FigureValue></Figure>
            <Figure><FigureName>流通</FigureName><FigureValue>1139.9亿</FigureValue></Figure>
            <Figure><FigureName>换</FigureName><FigureValue>1.07%</FigureValue></Figure>
            <Figure><FigureName>开</FigureName><FigureValue $down>50.31</FigureValue></Figure>
            <Figure><FigureName>市盈<Superscript>TTM</Superscript></FigureName><FigureValue>28.23</FigureValue></Figure>
            <Figure><FigureName>额</FigureName><FigureValue>12.35亿</FigureValue></Figure>
          </Figures>
          <Corner width="21" height="21" viewBox="0 0 21 21"><path d="M21 0v21H0z" fill="#6a6a6a" /></Corner>
        </Quote>
        <Divider />

        <PeriodTabs>
          <Tab $size={47} $mark={38}>分时</Tab>
          <Tab $size={47} $mark={38} $active>日K</Tab>
          <Tab $size={47} $mark={38}>60分</Tab>
          <Tab $size={47} $mark={38}>周K</Tab>
          <Tab $size={47} $mark={38}>季K</Tab>
          <Tab $size={47} $mark={38}>更多<svg width="28" height="22" viewBox="0 0 28 22"><path d="M0 0h28L14 22z" fill="#6a6a6a" /></svg></Tab>
          <PushRight>
            <IconButton aria-label="设置">
              <svg width="58" height="56" viewBox="0 0 58 56" fill="none" stroke="#949494" strokeWidth="4"><path d="M16 3h26l14 25-14 25H16L2 28z" strokeLinejoin="round" /><circle cx="29" cy="28" r="9" /></svg>
            </IconButton>
          </PushRight>
        </PeriodTabs>

        <AverageBar>
          <SmallPicker $size={33}>
            <select aria-label="主图指标" defaultValue="均线"><option>均线</option></select>
            <Caret />
          </SmallPicker>
          <AverageLegend>
            <LegendRow $gap={30} $line={43} $size={31}>
              <Tint $c="#dcdcdc">日线</Tint><Tint $c="#fff">M5:49.38</Tint><Tint $c={color.amber}>M10:50.05</Tint>
              <Tint $c={color.pink}>M20:48.16</Tint><Tint $c={color.pine}>M30:47.51</Tint>
            </LegendRow>
            <LegendRow $gap={30} $line={43} $size={31}>
              <Tint $c={color.sky}>M60:50.88</Tint><Tint $c={color.violet}>M120:49.37</Tint>
              <Tint $c="#78391d">M250:41.16</Tint><Tint $c={color.royal}>M25:47.38</Tint>
            </LegendRow>
          </AverageLegend>
          <AverageActions>
            <AdjustButton>前复权</AdjustButton>
            <ChipButton>筹码</ChipButton>
          </AverageActions>
        </AverageBar>

        <ChartArea>
          <MainChart />
          <ChartControls>
            <RoundButton aria-label="最早"><svg width="40" height="40" viewBox="0 0 40 40" fill="none" stroke="#b0b0b0" strokeWidth="3"><path d="M20 3 3 20l17 17M36 3 19 20l17 17" /></svg></RoundButton>
            <RoundButton aria-label="放大"><svg width="36" height="36" viewBox="0 0 36 36" stroke="#5c5c5c" strokeWidth="4"><path d="M1 18h34M18 1v34" /></svg></RoundButton>
            <RoundButton aria-label="缩小"><svg width="36" height="36" viewBox="0 0 36 36" stroke="#b0b0b0" strokeWidth="4"><path d="M1 18h34" /></svg></RoundButton>
            <RoundButton aria-label="左移"><svg width="30" height="40" viewBox="0 0 30 40" fill="none" stroke="#b0b0b0" strokeWidth="3"><path d="M21 3 4 20l17 17" /></svg></RoundButton>
            <RoundButton aria-label="右移"><svg width="30" height="40" viewBox="0 0 30 40" fill="none" stroke="#b0b0b0" strokeWidth="3"><path d="M9 3l17 17L9 37" /></svg></RoundButton>
            <RoundButton aria-label="全屏"><svg width="40" height="40" viewBox="0 0 40 40" fill="none" stroke="#b0b0b0" strokeWidth="3"><path d="M3 20V3h16M37 21v16H21" /></svg></RoundButton>
          </ChartControls>
        </ChartArea>

        <Panel>
          <VolumeChart />
          <PanelHead>
            <PanelLine>
              <IndicatorPicker name="成交额" />
              <LegendRow $gap={24} $line={46} $size={34}>
                <Tint $c={color.down}>额:12.35亿</Tint><Tint $c="#fff">M5:16.16亿</Tint><Tint $c={color.amber}>M10:17.90亿</Tint>
                <Tint $c="#dcdcdc">换手率:<Tint $c="#4ca0ee">1.07%</Tint></Tint>
              </LegendRow>
            </PanelLine>
          </PanelHead>
        </Panel>

        <Panel>
          <MomentumChart />
          <PanelHead>
            <PanelLine>
              <IndicatorPicker name="动量曲线" />
              <HelpButton aria-label="动量曲线说明">?</HelpButton>
              <LegendRow $gap={26} $line={46} $size={35}>
                <Tint $c={color.up}>阶段卖出:+3.20</Tint><Tint $c={color.down}>清仓卖出:+3.50</Tint><Tint $c={color.steel}>强弱分界线:+1.75</Tint>
              </LegendRow>
            </PanelLine>
            <SecondLine>
              <LegendRow $gap={26} $line={34} $size={34}>
                <Tint $c={color.text}>关注:+0.50</Tint><Tint $c="#666">关注买1:0.00</Tint><Tint $c={color.mute}>底部:+0.20</Tint>
                <Tint $c={color.ochre}>底部买2:0.00</Tint><Tint $c="#44649c">数值:+1.60</Tint>
              </LegendRow>
            </SecondLine>
          </PanelHead>
        </Panel>

        <Panel>
          <RsiChart />
          <PanelHead>
            <PanelLine>
              <IndicatorPicker name="RSI(7,14,28)" size={34} />
              <HelpButton aria-label="RSI说明">?</HelpButton>
              <LegendRow $gap={24} $line={46} $size={33}>
                <Tint $c="#dcdcdc">RSI7:+50.16</Tint><Tint $c="#e07b48">RSI14:+50.91</Tint><Tint $c="#c96b94">RSI28:+50.00</Tint>
              </LegendRow>
              <UnlockLink href="#unlock">解锁主力意图</UnlockLink>
            </PanelLine>
          </PanelHead>
        </Panel>
        <Divider />

        <SectionTabs>
          <Tab $size={46} $mark={60}>AI策略</Tab>
          <Tab $size={46} $mark={60}>资讯</Tab>
          <Tab $size={46} $mark={60}>盘口</Tab>
          <Tab $size={46} $mark={60}>资金</Tab>
          <Tab $size={50} $mark={60} $active>社区</Tab>
          <Tab $size={46} $mark={60}>简况(F10)</Tab>
          <Tab $size={46} $mark={60}>财务</Tab>
        </SectionTabs>

        <Community>
          <FeedTabs>
            <FeedTab $size={51} $mark={50} $active>最新</FeedTab>
            <FeedTab $size={50} $mark={50}>热门</FeedTab>
            <FeedIcons>
              <IconButton aria-label="私信"><svg width="58" height="48" viewBox="0 0 58 48" fill="none" stroke="#c8c8c8" strokeWidth="3"><rect x="2" y="2" width="54" height="44" rx="4" /><path d="M2 13l27 13 27-13" /></svg></IconButton>
              <IconButton aria-label="我的"><svg width="50" height="56" viewBox="0 0 50 56" fill="none" stroke="#c8c8c8" strokeWidth="3"><circle cx="25" cy="16" r="14" /><path d="M18 29Q2 35 2 48q0 5 5 5h36q5 0 5-5 0-13-16-19" /></svg></IconButton>
              <IconButton aria-label="刷新"><svg width="60" height="56" viewBox="0 0 60 56" fill="none" stroke="#c8c8c8" strokeWidth="3"><path d="M50 41A26 26 0 1 1 54 28" /><path d="M49 26h10l-5 6z" fill="#c8c8c8" strokeWidth="1" /></svg></IconButton>
            </FeedIcons>
          </FeedTabs>
          <SortRow>
            <SortLabel>内容排序</SortLabel>
            <Segment>
              <SegmentItem $on>最新回复</SegmentItem>
              <SegmentItem>最新发布</SegmentItem>
            </Segment>
          </SortRow>
        </Community>
      </main>

      <Dock>
        <SectorLink href="#sector">
          <svg width="32" height="19" viewBox="0 0 32 19"><path d="M16 0l16 19H0z" fill="#aaa" /></svg>
          <span>元件</span>
          <SectorMove>-2.30%</SectorMove>
        </SectorLink>
        {dock.map((d) => (
          <DockItem key={d.label}>{d.icon}<span>{d.label}</span></DockItem>
        ))}
      </Dock>
      <SystemNav aria-label="系统导航">
        <IconButton aria-label="后退"><svg width="56" height="60" viewBox="0 0 56 60" fill="none" stroke="#aeaeae" strokeWidth="5" strokeLinejoin="round"><path d="M50 4v52L6 30z" /></svg></IconButton>
        <IconButton aria-label="主页"><svg width="56" height="60" viewBox="0 0 56 60" fill="none" stroke="#aeaeae" strokeWidth="5"><circle cx="28" cy="30" r="25" /></svg></IconButton>
        <IconButton aria-label="最近任务"><svg width="56" height="60" viewBox="0 0 56 60" fill="none" stroke="#aeaeae" strokeWidth="5"><rect x="5" y="7" width="46" height="46" rx="2" /></svg></IconButton>
      </SystemNav>
    </>
  );
}
